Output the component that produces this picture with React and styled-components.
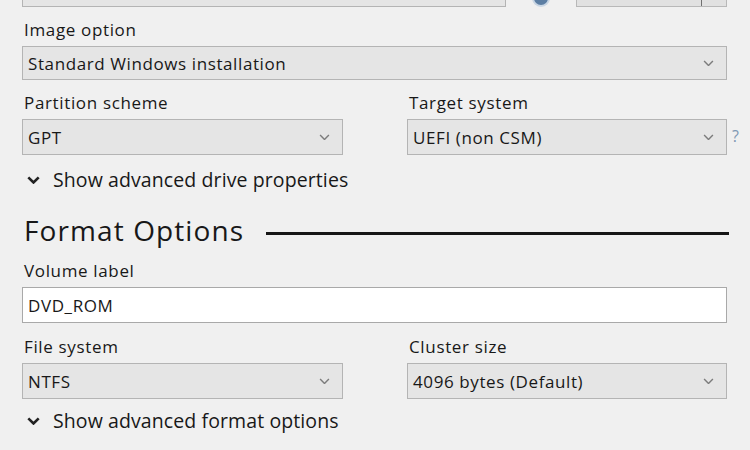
import styled, { createGlobalStyle } from "styled-components";

const GlobalStyle = createGlobalStyle`
  html, body {
    margin: 0;
    padding: 0;
    background: #f0f0f0;
  }
  * { box-sizing: border-box; }
`;

const Page = styled.div`
  display: flow-root;
  width: 750px;
  padding: 0 23px 0 22px;
  font-family: "Open Sans", "Noto Sans", sans-serif;
  color: #181818;
  background: #f0f0f0;
`;

/* device row, mostly scrolled off the top */
const TopRow = styled.div`
  display: flex;
  align-items: center;
  height: 36px;
  margin-top: -29px;
`;

const Combo = styled.div`
  display: flex;
  align-items: center;
  justify-content: space-between;
  width: ${(p) => p.$width || "100%"};
  height: ${(p) => p.$height || 35}px;
  padding: 0 12px 0 5px;
  background: ${(p) => (p.$white ? "#ffffff" : "#e5e5e5")};
  border: 1px solid ${(p) => (p.$white ? "#a9a9a9" : "#b4b4b4")};
  font-size: 17px;
  letter-spacing: 0.6px;
  white-space: nowrap;
`;

const StatusDot = styled.div`
  align-self: flex-end;
  width: 14px;
  height: 14px;
  margin: 0 0 2px 28px;
  border-radius: 50%;
  background: #5c7ea3;
  box-shadow: 0 0 0 2px #c9d6e4;
`;

const SplitButton = styled.div`
  display: flex;
  width: 151px;
  height: 36px;
  margin-left: auto;
  background: #e1e1e1;
  border: 1px solid #b8b8b8;
`;

const SplitMain = styled.div`
  flex: 1;
  border-right: 1px solid #707070;
`;

const SplitArrow = styled.div`
  width: 24px;
`;

const Label = styled.div`
  padding-left: 2px;
  font-size: 17px;
  letter-spacing: 0.65px;
  line-height: 22px;
  margin-top: ${(p) => p.$top || 0}px;
  margin-bottom: 5px;
`;

const Columns = styled.div`
  display: grid;
  grid-template-columns: 321px 320px;
  column-gap: 64px;
  margin-top: ${(p) => p.$top || 0}px;
`;

const Field = styled.div`
  display: flex;
  flex-direction: column;
`;

const HelpWrap = styled.div`
  position: relative;
`;

const Help = styled.span`
  position: absolute;
  left: calc(100% + 5px);
  top: 6px;
  font-size: 16px;
  color: #7f98b4;
`;

const Toggle = styled.div`
  display: flex;
  align-items: center;
  gap: 13px;
  margin-top: ${(p) => p.$top || 0}px;
  padding-left: 5px;
  font-size: 19.5px;
  letter-spacing: 0.1px;
  line-height: 26px;
`;

const SectionHead = styled.div`
  display: flex;
  align-items: center;
  gap: 22px;
  margin-top: 19px;
  height: 36px;
`;

const SectionTitle = styled.h2`
  margin: 0;
  padding-left: 2px;
  font-size: 28px;
  font-weight: 400;
  letter-spacing: 1.1px;
  white-space: nowrap;
`;

const Rule = styled.div`
  flex: 1;
  height: 3px;
  margin-top: 7px;
  margin-right: -2px;
  background: #161616;
`;

const Chevron = ({ color = "#7c7c7c", size = 11, weight = 1.3 }) => (
  <svg width={size} height={size * 0.6} viewBox="0 0 10 6" fill="none">
    <polyline points="1,1 5,5 9,1" stroke={color} strokeWidth={weight} />
  </svg>
);

const Select = ({ value, width, height }) => (
  <Combo $width={width} $height={height}>
    <span>{value}</span>
    <Chevron />
  </Combo>
);

export default function App() {
  return (
    <>
      <GlobalStyle />
      <Page>
        <TopRow>
          <Combo $width="484px" $height={36} />
          <StatusDot />
          <SplitButton>
            <SplitMain />
            <SplitArrow />
          </SplitButton>
        </TopRow>

        <Label $top={12}>Image option</Label>
        <Select value="Standard Windows installation" height={34} />

        <Columns $top={12}>
          <Field>
            <Label>Partition scheme</Label>
            <Select value="GPT" height={36} />
          </Field>
          <Field>
            <Label>Target system</Label>
            <HelpWrap>
              <Select value="UEFI (non CSM)" height={36} />
              <Help>?</Help>
            </HelpWrap>
          </Field>
        </Columns>

        <Toggle $top={12}>
          <Chevron color="#222" size={13} weight={2} />
          Show advanced drive properties
        </Toggle>

        <SectionHead>
          <SectionTitle>Format Options</SectionTitle>
          <Rule />
        </SectionHead>

        <Label $top={12}>Volume label</Label>
        <Combo $white $height={36}>
          <span>DVD_ROM</span>
        </Combo>

        <Columns $top={13}>
          <Field>
            <Label>File system</Label>
            <Select value="NTFS" height={36} />
          </Field>
          <Field>
            <Label>Cluster size</Label>
            <Select value="4096 bytes (Default)" height={36} />
          </Field>
        </Columns>

        <Toggle $top={9}>
          <Chevron color="#222" size={13} weight={2} />
          Show advanced format options
        </Toggle>
      </Page>
    </>
  );
}
